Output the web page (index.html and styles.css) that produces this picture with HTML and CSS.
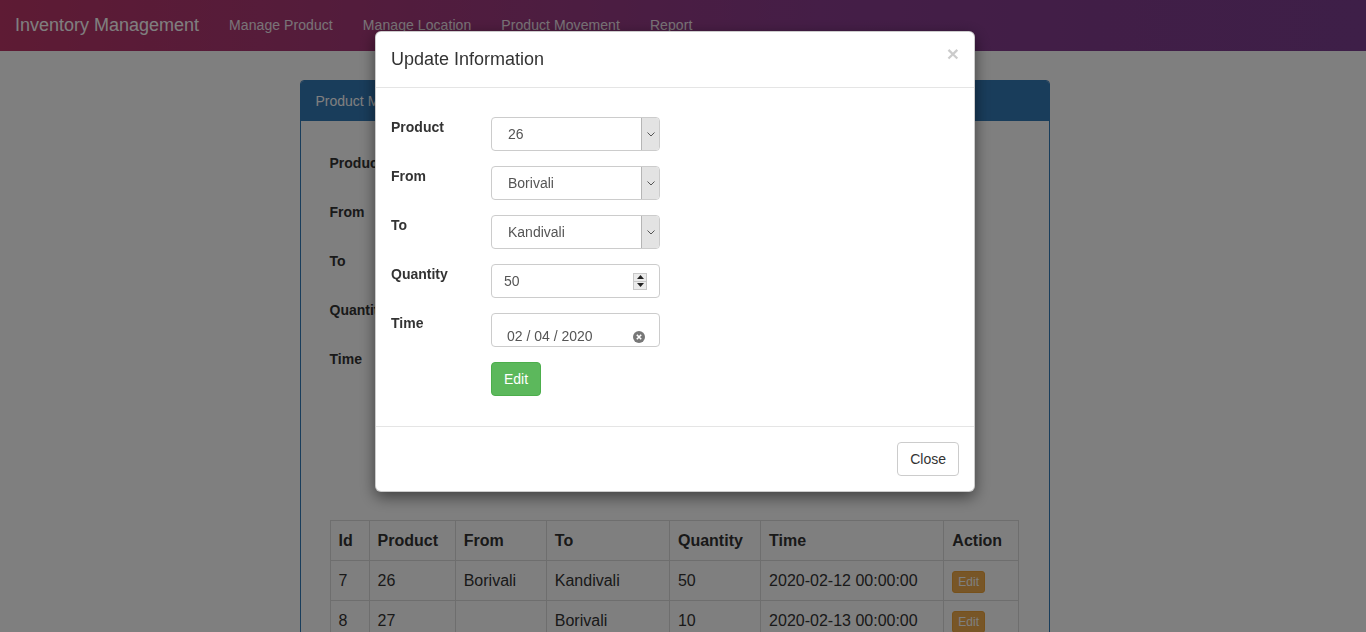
FILE: index.html
```html
<!DOCTYPE html>
<html lang="en">
<head>
<meta charset="utf-8">
<title>Inventory Management</title>
<link rel="stylesheet" href="styles.css">
</head>
<body>
<nav class="navbar">
  <a class="brand">Inventory Management</a>
  <a class="nav-link">Manage Product</a>
  <a class="nav-link">Manage Location</a>
  <a class="nav-link">Product Movement</a>
  <a class="nav-link">Report</a>
</nav>

<div class="container">
  <div class="panel">
    <div class="panel-heading">Product Movement</div>
    <div class="panel-body">
      <div class="page-form">
        <div class="page-row"><label class="page-label">Product</label><div class="page-input"></div></div>
        <div class="page-row"><label class="page-label">From</label><div class="page-input"></div></div>
        <div class="page-row"><label class="page-label">To</label><div class="page-input"></div></div>
        <div class="page-row"><label class="page-label">Quantity</label><div class="page-input"></div></div>
        <div class="page-row"><label class="page-label">Time</label><div class="page-input"></div></div>
        <div class="page-row"><span class="page-label"></span><div class="page-input short"></div></div>
      </div>
      <table class="data-table">
        <colgroup>
          <col class="c-id"><col class="c-prod"><col class="c-from"><col class="c-to"><col class="c-qty"><col class="c-time"><col class="c-act">
        </colgroup>
        <thead>
          <tr><th>Id</th><th>Product</th><th>From</th><th>To</th><th>Quantity</th><th>Time</th><th>Action</th></tr>
        </thead>
        <tbody>
          <tr><td>7</td><td>26</td><td>Borivali</td><td>Kandivali</td><td>50</td><td>2020-02-12 00:00:00</td><td><button class="btn-xs">Edit</button></td></tr>
          <tr><td>8</td><td>27</td><td></td><td>Borivali</td><td>10</td><td>2020-02-13 00:00:00</td><td><button class="btn-xs">Edit</button></td></tr>
        </tbody>
      </table>
    </div>
  </div>
</div>

<div class="backdrop"></div>

<div class="modal">
  <div class="modal-content">
    <div class="modal-header">
      <h4 class="modal-title">Update Information</h4>
      <span class="close">&times;</span>
    </div>
    <div class="modal-body">
      <div class="form-row">
        <label class="form-label">Product</label>
        <div class="select-box"><span class="select-value">26</span><span class="select-arrow"><svg width="8" height="5" viewBox="0 0 8 5"><path d="M0.5 0.5 L4 4 L7.5 0.5" fill="none" stroke="#555" stroke-width="1"/></svg></span></div>
      </div>
      <div class="form-row">
        <label class="form-label">From</label>
        <div class="select-box"><span class="select-value">Borivali</span><span class="select-arrow"><svg width="8" height="5" viewBox="0 0 8 5"><path d="M0.5 0.5 L4 4 L7.5 0.5" fill="none" stroke="#555" stroke-width="1"/></svg></span></div>
      </div>
      <div class="form-row">
        <label class="form-label">To</label>
        <div class="select-box"><span class="select-value">Kandivali</span><span class="select-arrow"><svg width="8" height="5" viewBox="0 0 8 5"><path d="M0.5 0.5 L4 4 L7.5 0.5" fill="none" stroke="#555" stroke-width="1"/></svg></span></div>
      </div>
      <div class="form-row">
        <label class="form-label">Quantity</label>
        <div class="input-box">
          <span class="input-value">50</span>
          <span class="spinner">
            <span class="spin-half"><svg width="7" height="4" viewBox="0 0 7 4"><path d="M0 4 L3.5 0 L7 4 Z" fill="#222"/></svg></span>
            <span class="spin-half"><svg width="7" height="4" viewBox="0 0 7 4"><path d="M0 0 L3.5 4 L7 0 Z" fill="#222"/></svg></span>
          </span>
        </div>
      </div>
      <div class="form-row">
        <label class="form-label">Time</label>
        <div class="input-box date-box">
          <span class="date-value">02 / 04 / 2020</span>
          <span class="clear-icon"><svg width="12" height="12" viewBox="0 0 12 12"><circle cx="6" cy="6" r="6" fill="#777"/><path d="M3.8 3.8 L8.2 8.2 M8.2 3.8 L3.8 8.2" stroke="#fff" stroke-width="1.6"/></svg></span>
        </div>
      </div>
      <div class="form-row">
        <span class="form-label"></span>
        <button class="btn-success">Edit</button>
      </div>
    </div>
    <div class="modal-footer">
      <button class="btn-default">Close</button>
    </div>
  </div>
</div>
</body>
</html>
```

FILE: styles.css
```css
html, body {
  margin: 0;
  height: 632px;
  overflow: hidden;
}
body {
  padding-right: 17px;
  font-family: "Liberation Sans", Helvetica, Arial, sans-serif;
  font-size: 14px;
  line-height: 1.42857;
  color: #333;
  background: #fff;
}

/* navbar */
.navbar {
  height: 51px;
  margin-right: -17px;
  display: flex;
  align-items: center;
  background: linear-gradient(to right, #bc3668, #8a3c8e 60%, #7c3e90);
}
.brand {
  padding: 0 15px;
  font-size: 18px;
  color: #fff;
}
.nav-link {
  padding: 0 15px;
  font-size: 14px;
  letter-spacing: 0.07px;
  color: #f2e6ee;
}

/* page */
.container {
  width: 750px;
  margin: 29px auto 0;
}
.panel {
  border: 1px solid #337ab7;
  border-radius: 4px;
  background: #fff;
}
.panel-heading {
  background: #337ab7;
  color: #fff;
  font-size: 14px;
  line-height: 20px;
  padding: 10px 15px 10px 15px;
  border-top-left-radius: 3px;
  border-top-right-radius: 3px;
}
.panel-body {
  padding: 32px 29px 0;
}
.page-form {
  display: flex;
  flex-direction: column;
  gap: 15px;
  margin-bottom: 88px;
}
.page-row {
  display: flex;
  height: 34px;
}
.page-label {
  width: 100px;
  font-weight: bold;
  line-height: 20px;
}
.page-input {
  width: 300px;
  border: 1px solid #ccc;
  border-radius: 4px;
}
.page-input.short {
  width: 50px;
  background: #5cb85c;
}
.data-table {
  width: 689px;
  border-collapse: collapse;
  table-layout: fixed;
  font-size: 16px;
  line-height: 24px;
}
.c-id { width: 39px; }
.c-prod { width: 86px; }
.c-from { width: 91px; }
.c-to { width: 123px; }
.c-qty { width: 91px; }
.c-time { width: 183px; }
.c-act { width: 74px; }
.data-table th,
.data-table td {
  border: 1px solid #ddd;
  padding: 8px 8px 7px;
  text-align: left;
  vertical-align: top;
}
.data-table th {
  font-weight: bold;
}
.btn-xs {
  font-family: inherit;
  font-size: 12px;
  line-height: 18px;
  padding: 1px 5px;
  color: #fff;
  background: #f0ad4e;
  border: 1px solid #eea236;
  border-radius: 3px;
  margin-top: 1px;
}

/* overlay */
.backdrop {
  position: fixed;
  inset: 0;
  background: rgba(0, 0, 0, 0.5);
}
.modal {
  position: fixed;
  inset: 0;
  padding-right: 16px;
}
.modal-content {
  width: 598px;
  margin: 31px auto 0;
  background: #fff;
  border: 1px solid rgba(0, 0, 0, 0.2);
  border-radius: 6px;
  box-shadow: 0 5px 15px rgba(0, 0, 0, 0.5);
}
.modal-header {
  display: flex;
  justify-content: space-between;
  align-items: flex-start;
  padding: 14px 15px 15px;
  border-bottom: 1px solid #e5e5e5;
}
.modal-title {
  margin: 0;
  font-size: 18px;
  font-weight: normal;
  line-height: 26px;
}
.close {
  font-size: 21px;
  font-weight: bold;
  line-height: 1;
  color: #000;
  opacity: 0.2;
  margin-top: -3px;
}
.modal-body {
  padding: 29px 15px 15px;
  display: flex;
  flex-direction: column;
  gap: 15px;
}
.form-row {
  display: flex;
}
.form-row:last-child {
  margin-bottom: 15px;
}
.form-label {
  width: 100px;
  font-weight: bold;
  line-height: 20px;
  padding-top: 0;
}
.select-box {
  width: 169px;
  height: 34px;
  box-sizing: border-box;
  border: 1px solid #ccc;
  border-radius: 4px;
  display: flex;
  align-items: stretch;
  overflow: hidden;
}
.select-value {
  flex: 1;
  padding-left: 16px;
  line-height: 32px;
  color: #555;
}
.select-arrow {
  width: 17px;
  background: #e3e3e3;
  border-left: 1px solid #b5b5b5;
  display: flex;
  align-items: center;
  justify-content: center;
}
.input-box {
  width: 169px;
  height: 34px;
  box-sizing: border-box;
  border: 1px solid #ccc;
  border-radius: 4px;
  display: flex;
  align-items: center;
  padding: 0 12px 0 12px;
  color: #555;
}
.input-value {
  flex: 1;
  padding-top: 2px;
}
.spinner {
  width: 14px;
  height: 17px;
  display: flex;
  flex-direction: column;
  border: 1px solid #c8c8c8;
  box-sizing: border-box;
  background: #ebebeb;
}
.spin-half {
  flex: 1;
  display: flex;
  align-items: center;
  justify-content: center;
}
.spin-half + .spin-half {
  border-top: 1px solid #c8c8c8;
}
.date-box {
  align-items: flex-end;
  padding-bottom: 0;
  padding-left: 15px;
  padding-right: 14px;
  overflow: hidden;
}
.date-value {
  flex: 1;
  font-size: 14px;
  line-height: 18px;
  margin-bottom: 1px;
}
.clear-icon {
  display: flex;
  margin-bottom: 3px;
}
.btn-success {
  font-family: inherit;
  font-size: 14px;
  line-height: 20px;
  height: 34px;
  padding: 6px 12px;
  color: #fff;
  background: #5cb85c;
  border: 1px solid #4cae4c;
  border-radius: 4px;
}
.modal-footer {
  display: flex;
  justify-content: flex-end;
  padding: 15px;
  border-top: 1px solid #e5e5e5;
}
.btn-default {
  font-family: inherit;
  font-size: 14px;
  line-height: 20px;
  height: 34px;
  padding: 6px 12px;
  color: #333;
  background: #fff;
  border: 1px solid #ccc;
  border-radius: 4px;
}
```
